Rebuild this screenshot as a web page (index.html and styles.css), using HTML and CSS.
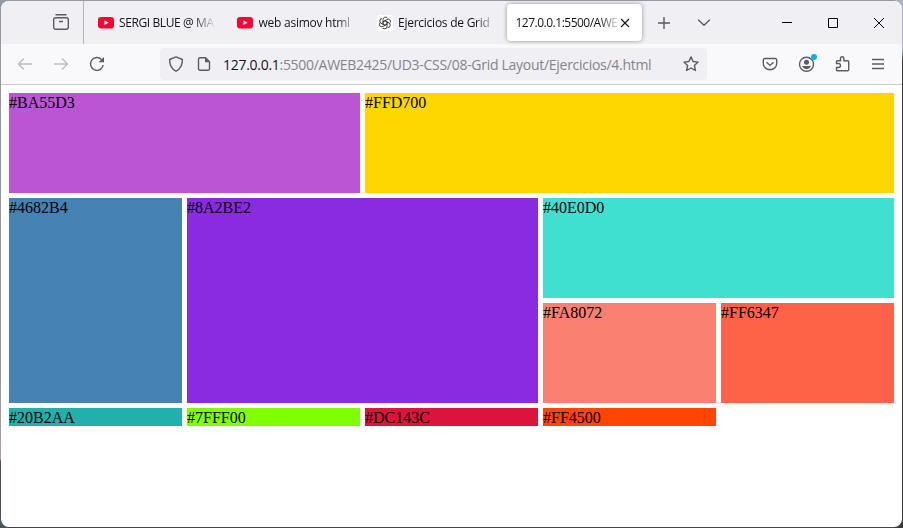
FILE: index.html
```html
<!DOCTYPE html>
<html lang="es">
<head>
<meta charset="utf-8">
<title>4.html</title>
<link rel="stylesheet" href="styles.css">
</head>
<body>
<div class="window">
  <header class="tabstrip">
    <div class="view"><svg class="icon" width="18" height="18" viewBox="0 0 18 18"><path d="M3.500 1.700h11"/><rect x="1.700" y="4.700" width="14.600" height="11.600" rx="2"/><path d="M7 8.500h4"/></svg></div>
    <div class="tab"><svg width="16" height="16" viewBox="0 0 16 16"><rect y="2" width="16" height="11.400" rx="3" fill="#ff0033"/><path d="M6.400 5.300v4.800L10.600 7.700z" fill="#fff"/></svg><span class="label t1">SERGI BLUE @ MA</span></div>
    <div class="tab"><svg width="16" height="16" viewBox="0 0 16 16"><rect y="2" width="16" height="11.400" rx="3" fill="#ff0033"/><path d="M6.400 5.300v4.800L10.600 7.700z" fill="#fff"/></svg><span class="label">web asimov html</span></div>
    <div class="tab"><svg width="16" height="16" viewBox="0 0 16 16"><rect width="16" height="16" rx="3" fill="#fff"/><g fill="none" stroke="#333" stroke-width=".9"><path id="petal" d="M6 9.200V4.600a2.500 2.500 0 0 1 4.700-1.200M6 6.800l4-2.300a2.500 2.500 0 0 1 3.500 3"/><use href="#petal" transform="rotate(120 8 8)"/><use href="#petal" transform="rotate(240 8 8)"/><path d="M8 5.700l2 1.150v2.300L8 10.300 6 9.150v-2.300z"/></g></svg><span class="label">Ejercicios de Grid</span></div>
    <div class="tab active"><span class="label">127.0.0.1:5500/AWE</span><svg class="close" width="10" height="10" viewBox="0 0 10 10"><path d="M1 1l8 8M9 1L1 9"/></svg></div>
    <svg class="icon plus" width="14" height="14" viewBox="0 0 14 14"><path d="M7 1v12M1 7h12"/></svg>
    <svg class="icon chev" width="14" height="14" viewBox="0 0 14 14"><path d="M1.200 3.700L7 9.200l5.800-5.500"/></svg>
    <div class="controls">
      <svg width="12" height="12" viewBox="0 0 12 12"><path d="M1 5.500h10"/></svg>
      <svg width="12" height="12" viewBox="0 0 12 12"><path d="M1.500 1.500h9v9h-9z"/></svg>
      <svg width="12" height="12" viewBox="0 0 12 12"><path d="M1 1l10 10M11 1L1 11"/></svg>
    </div>
  </header>
  <nav class="toolbar">
    <svg class="icon off" width="16" height="16" viewBox="0 0 16 16"><path d="M15 8H1.500M7 2.500L1.500 8 7 13.500"/></svg>
    <svg class="icon off" width="16" height="16" viewBox="0 0 16 16"><path d="M1 8h13.500M9 2.500L14.500 8 9 13.500"/></svg>
    <svg class="icon" width="16" height="16" viewBox="0 0 16 16"><path d="M14.200 9A6.400 6.400 0 1 1 12.500 3.500"/><path class="solid" d="M15 1v5.300H9.500z"/></svg>
    <div class="urlbar">
      <svg class="icon" width="16" height="16" viewBox="0 0 16 16"><path d="M8 .8L14.400 3.500C14.400 9 12.500 13 8 15.200 3.500 13 1.600 9 1.600 3.500z" stroke-linejoin="round"/></svg>
      <svg class="icon page" width="16" height="16" viewBox="0 0 16 16"><path d="M9.500 1.700H4a1.500 1.500 0 0 0-1.500 1.500v9.600A1.500 1.500 0 0 0 4 14.300h8a1.500 1.500 0 0 0 1.500-1.500V5.700z"/><path class="solid" d="M9 1.500v4.700h4.700z"/></svg>
      <span class="url"><b>127.0.0.1</b>:5500/AWEB2425/UD3-CSS/08-Grid Layout/Ejercicios/4.html</span>
      <svg class="icon star" width="16" height="16" viewBox="0 0 16 16"><path d="M8 .9l2.100 4.600 5 .6-3.700 3.400 1 5L8 12l-4.400 2.500 1-5L.9 6.100l5-.6z" stroke-linejoin="round"/></svg>
    </div>
    <svg class="icon pocket" width="16" height="16" viewBox="0 0 16 16"><path d="M2.800 2.500h10.400a1.500 1.500 0 0 1 1.500 1.500v3.500a6.700 6.200 0 0 1-13.400 0V4a1.500 1.500 0 0 1 1.500-1.500z"/><path d="M4.500 6.200L8 9.400l3.500-3.200"/></svg>
    <div class="account"><svg class="icon" width="16" height="16" viewBox="0 0 16 16"><circle cx="8.500" cy="8.300" r="7"/><circle class="solid" cx="8.500" cy="6.200" r="2.500"/><path class="solid" d="M4.100 10.100h8.800a4.700 4.700 0 0 1-8.800 0z"/></svg><i class="dot"></i></div>
    <svg class="icon ext" width="16" height="16" viewBox="0 0 16 16"><path d="M2.500 7.500V5.700Q2.500 4.700 3.500 4.700h3V2.500a1.700 1.700 0 0 1 3.400 0v2.200h3.800q1 0 1 1v8q0 1-1 1H3.500q-1 0-1-1v-2.200h2a1.900 1.900 0 0 0 0-4z"/></svg>
    <svg class="icon menu" width="16" height="16" viewBox="0 0 16 16"><path d="M2 3.500h12M2 8h12M2 12.500h12"/></svg>
  </nav>
  <main class="grid">
    <div class="orchid">#BA55D3</div>
    <div class="gold">#FFD700</div>
    <div class="steel">#4682B4</div>
    <div class="violet">#8A2BE2</div>
    <div class="turquoise">#40E0D0</div>
    <div class="salmon">#FA8072</div>
    <div class="tomato">#FF6347</div>
    <div class="sea">#20B2AA</div>
    <div class="chartreuse">#7FFF00</div>
    <div class="crimson">#DC143C</div>
    <div class="orange">#FF4500</div>
  </main>
</div>
</body>
</html>
```
FILE: styles.css
```css
* { box-sizing: border-box; }
body {
  margin: 0;
  padding: 1px;
  height: 528px;
  overflow: hidden;
  background:
    linear-gradient(#aab0bc 0 50px, #3b3b3d 60px) right / 8px 100% no-repeat,
    linear-gradient(#9599a3 0 380px, #b3a09f 459px, #46545c 461px) left / 8px 100% no-repeat,
    linear-gradient(#9599a3 50%, #414447 50%);
}
.window { height: 526px; border-radius: 8px; overflow: hidden; background: #fff; }
svg { display: block; flex: none; }
.icon { fill: none; stroke: #5b5b66; stroke-width: 1.4; }
.icon .solid { fill: #5b5b66; stroke: none; }
.tabstrip { height: 43px; background: #f0eff4; display: flex; align-items: center; font: 12px/16px "Open Sans", sans-serif; letter-spacing: -0.25px; color: #15141a; }
.view { width: 83px; height: 43px; border-right: 1px solid #b5b5bb; padding: 12px 0 0 51px; flex: none; }
.tab { width: 139.5px; display: flex; align-items: center; gap: 5.5px; padding-left: 13.5px; flex: none; }
.label { width: 96px; white-space: nowrap; mask-image: linear-gradient(90deg, #000 78px, transparent 98px); }
.t1 { letter-spacing: -0.4px; mask-image: linear-gradient(90deg, #000 74px, transparent 97px); }
.active { width: 135px; height: 37px; margin: 0 1px 0 4px; padding-left: 9px; gap: 3px; background: #fff; border-radius: 4px; box-shadow: 0 0 4px rgba(0,0,0,.4); }
.active .label { width: 101px; letter-spacing: -0.5px; mask-image: linear-gradient(90deg, #000 84px, transparent 104px); }
.close { stroke: #15141a; stroke-width: 1.1; }
.plus { margin-left: 14px; }
.chev { margin-left: 26px; }
.controls { display: flex; gap: 34px; margin: 0 17px 0 auto; }
.controls svg { fill: none; stroke: #000; stroke-width: 1; }
.toolbar { height: 41px; background: #f9f9fb; border-bottom: 1px solid #ccccd1; display: flex; align-items: center; padding: 0 16px; }
.toolbar > .icon + .icon { margin-left: 20px; }
.toolbar > .off { stroke: #bdbdc2; }
.urlbar { width: 547px; height: 32px; margin-left: 55px; padding: 0 8px; border-radius: 4px; background: #f0eff4; display: flex; align-items: center; flex: none; }
.page { margin-left: 12px; }
.url { margin-left: 11px; padding-top: 2px; font: 14px/20px "Open Sans", sans-serif; letter-spacing: -0.285px; color: #85848c; white-space: nowrap; }
.url b { font-weight: 400; color: #15141a; }
.star { margin-left: auto; }
.pocket { margin-left: 55px; }
.account { position: relative; margin-left: 20px; }
.dot { position: absolute; left: 13px; top: -2px; width: 6px; height: 6px; border-radius: 50%; background: #00b3f4; }
.ext { margin-left: 20px; }
.grid { margin: 8px; display: grid; grid-template-columns: repeat(5, 1fr); grid-template-rows: repeat(3, 100px) 18px; gap: 5px; font: 16px/20px "Liberation Serif", serif; color: #000; }
.orchid { background: #ba55d3; grid-column: span 2; }
.gold { background: #ffd700; grid-column: span 3; }
.steel { background: #4682b4; grid-row: span 2; }
.violet { background: #8a2be2; grid-area: 2 / 2 / span 2 / span 2; }
.turquoise { background: #40e0d0; grid-column: span 2; }
.salmon { background: #fa8072; }
.tomato { background: #ff6347; }
.sea { background: #20b2aa; }
.chartreuse { background: #7fff00; }
.crimson { background: #dc143c; }
.orange { background: #ff4500; }
```
